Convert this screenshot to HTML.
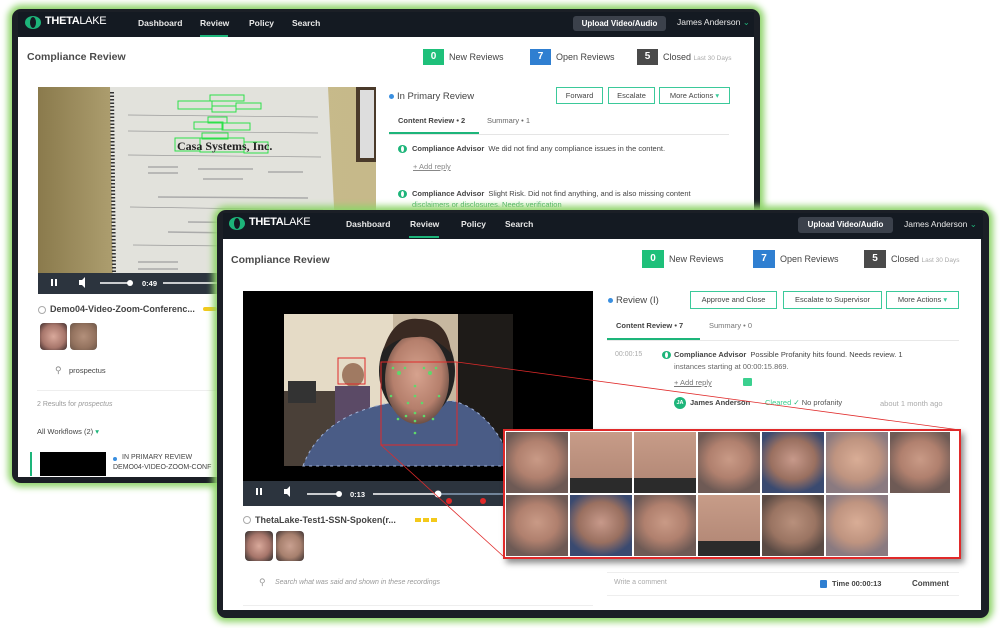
<!DOCTYPE html>
<html><head><meta charset="utf-8"><style>
*{margin:0;padding:0;box-sizing:border-box}
body{width:1000px;height:628px;background:#fff;position:relative;overflow:hidden;font-family:"Liberation Sans",sans-serif;color:#444}
.a{position:absolute;white-space:nowrap}
.win{position:absolute;background:#1b1f26;border-radius:9px;box-shadow:0 0 7px 4px #8fd46a}
.nav{position:absolute;background:#141a22}
.navt{position:absolute;color:#e8e8e8;font-size:8.5px;font-weight:bold}
.logo{position:absolute;width:16px;height:13px;border-radius:50%;background:#1db57a}
.logo:after{content:"";position:absolute;left:5px;top:1px;width:6px;height:11px;border-radius:50%;background:#141a22}
.sl{position:absolute;width:9px;height:8px;border-radius:50%;background:#1db57a}
.sl:after{content:"";position:absolute;left:3px;top:1px;width:3px;height:6px;border-radius:50%;background:#fff}
.up{position:absolute;background:#3b414b;color:#fff;font-size:8px;font-weight:bold;border-radius:3px;text-align:center}
.box{position:absolute;color:#fff;font-weight:bold;font-size:10px;text-align:center}
.btn{position:absolute;border:1px solid #3bc99a;color:#444;font-size:7.5px;text-align:center;background:#fff}
.face{position:absolute;border-radius:4px}
.tile{position:absolute;width:62px;height:61px;background:radial-gradient(ellipse 60% 55% at 50% 45%,#c99a86 0%,#b0806e 55%,#6e5a55 100%)}
</style></head><body>

<!-- WINDOW 1 -->
<div class="win" style="left:12px;top:9px;width:748px;height:474px"></div>
<div class="nav" style="left:18px;top:12px;width:736px;height:25px"></div>
<div class="logo" style="left:25px;top:16px"></div>
<div class="a" style="left:45px;top:15px;color:#fff;font-size:11px;font-weight:bold;letter-spacing:-0.3px">THETA<span style="font-weight:normal">LAKE</span></div>
<div class="navt" style="left:138px;top:18px">Dashboard</div>
<div class="navt" style="left:200px;top:18px">Review</div>
<div style="position:absolute;left:200px;top:35px;width:28px;height:2px;background:#1db57a"></div>
<div class="navt" style="left:249px;top:18px">Policy</div>
<div class="navt" style="left:292px;top:18px">Search</div>
<div class="up" style="left:573px;top:16px;width:93px;height:15px;line-height:15px">Upload Video/Audio</div>
<div class="navt" style="left:677px;top:17px;font-weight:normal">James Anderson <span style="color:#1db57a">⌄</span></div>
<div style="position:absolute;left:18px;top:37px;width:736px;height:440px;background:#fff"></div>
<div class="a" style="left:27px;top:51px;font-size:10.5px;font-weight:bold;color:#4a4a4a">Compliance Review</div>
<div class="box" style="left:423px;top:49px;width:21px;height:16px;line-height:16px;background:#1ec07a">0</div>
<div class="a" style="left:449px;top:52px;font-size:9px">New Reviews</div>
<div class="box" style="left:530px;top:49px;width:21px;height:16px;line-height:16px;background:#2f7fd1">7</div>
<div class="a" style="left:556px;top:52px;font-size:9px">Open Reviews</div>
<div class="box" style="left:637px;top:49px;width:21px;height:16px;line-height:16px;background:#4a4a4a">5</div>
<div class="a" style="left:663px;top:52px;font-size:9px">Closed <span style="font-size:6.5px;color:#aaa">Last 30 Days</span></div>

<!-- video 1 -->
<svg class="a" style="left:38px;top:87px" width="338" height="207" viewBox="0 0 338 207">
<defs><linearGradient id="wall" x1="0" x2="1"><stop offset="0" stop-color="#8a7a4c"/><stop offset=".4" stop-color="#c9bb8b"/><stop offset="1" stop-color="#c6b98a"/></linearGradient></defs>
<rect width="338" height="207" fill="url(#wall)"/>
<polygon points="72,0 290,0 300,200 75,207" fill="#e2e2dc"/>
<line x1="74" y1="5" x2="76" y2="185" stroke="#333" stroke-width="4" stroke-dasharray="1.5 2"/>
<rect x="318" y="0" width="20" height="75" fill="#4a3a2a"/><rect x="322" y="3" width="14" height="68" fill="#ddd"/>
<g fill="none" stroke="#2de04a" stroke-width="1"><rect x="140" y="14" width="34" height="8"/><rect x="172" y="8" width="34" height="6"/><rect x="174" y="19" width="24" height="6"/><rect x="198" y="16" width="25" height="6"/><rect x="170" y="30" width="19" height="6"/><rect x="156" y="35" width="29" height="7"/><rect x="184" y="36" width="28" height="7"/><rect x="164" y="46" width="26" height="6"/><rect x="137" y="51" width="25" height="13"/><rect x="162" y="51" width="44" height="14"/><rect x="206" y="55" width="24" height="11"/></g>
<text x="139" y="63" font-family="Liberation Serif" font-size="12" font-weight="bold" fill="#222">Casa Systems, Inc.</text>
<g stroke="#999" stroke-width=".7"><line x1="90" y1="28" x2="280" y2="30"/><line x1="90" y1="44" x2="280" y2="46"/><line x1="90" y1="68" x2="283" y2="70"/><line x1="92" y1="120" x2="285" y2="123"/><line x1="95" y1="158" x2="290" y2="160"/></g>
<g stroke="#aaa" stroke-width="1.5"><line x1="110" y1="80" x2="140" y2="80"/><line x1="160" y1="82" x2="215" y2="82"/><line x1="230" y1="85" x2="265" y2="85"/><line x1="110" y1="86" x2="140" y2="86"/><line x1="165" y1="92" x2="205" y2="92"/><line x1="120" y1="110" x2="270" y2="111"/><line x1="150" y1="135" x2="260" y2="136"/><line x1="130" y1="145" x2="270" y2="147"/><line x1="100" y1="175" x2="140" y2="175"/><line x1="100" y1="182" x2="140" y2="182"/></g>
<rect x="0" y="186" width="338" height="21" fill="#2c343e"/>
<rect x="13" y="192" width="2" height="7" fill="#fff"/><rect x="17" y="192" width="2" height="7" fill="#fff"/>
<polygon points="41,193 44,193 47,190 47,201 44,198 41,198" fill="#fff"/>
<line x1="62" y1="196" x2="92" y2="196" stroke="#fff" stroke-width="1.5"/><circle cx="92" cy="196" r="3" fill="#fff"/>
<text x="104" y="199" font-size="7.5" fill="#fff" font-weight="bold" font-family="Liberation Sans">0:49</text>
<line x1="125" y1="196" x2="338" y2="196" stroke="#fff" stroke-width="1.5"/>
</svg>

<div class="btn" style="left:556px;top:87px;width:47px;height:17px;line-height:15px">Forward</div>
<div class="btn" style="left:608px;top:87px;width:47px;height:17px;line-height:15px">Escalate</div>
<div class="btn" style="left:659px;top:87px;width:71px;height:17px;line-height:15px">More Actions <span style="color:#3bc99a">▾</span></div>
<div style="position:absolute;left:389px;top:94px;width:5px;height:5px;border-radius:50%;background:#3a8fe0"></div>
<div class="a" style="left:397px;top:91px;font-size:9.5px">In Primary Review</div>
<div class="a" style="left:398px;top:116px;font-size:7.5px;font-weight:bold">Content Review • 2</div>
<div class="a" style="left:487px;top:116px;font-size:7.5px;color:#666">Summary • 1</div>
<div style="position:absolute;left:389px;top:134px;width:340px;height:1px;background:#e5e5e5"></div>
<div style="position:absolute;left:389px;top:132px;width:90px;height:2px;background:#1db57a"></div>
<div class="sl" style="left:398px;top:145px"></div>
<div class="a" style="left:412px;top:144px;font-size:7.5px"><b>Compliance Advisor</b> &nbsp;We did not find any compliance issues in the content.</div>
<div class="a" style="left:413px;top:162px;font-size:7.5px;color:#888;text-decoration:underline">+ Add reply</div>
<div class="sl" style="left:398px;top:190px"></div>
<div class="a" style="left:412px;top:189px;font-size:7.5px"><b>Compliance Advisor</b> &nbsp;Slight Risk. Did not find anything, and is also missing content</div>
<div class="a" style="left:412px;top:200px;font-size:7.5px;color:#3aaa60">disclaimers or disclosures. Needs verification</div>

<div style="position:absolute;left:38px;top:306px;width:8px;height:8px;border-radius:50%;border:1.5px solid #aaa"></div>
<div class="a" style="left:50px;top:304px;font-size:9px;font-weight:bold">Demo04-Video-Zoom-Conferenc...</div>
<div style="position:absolute;left:203px;top:307px;width:14px;height:4px;background:#f3c91b;border-radius:2px"></div>
<div class="face" style="left:40px;top:323px;width:27px;height:27px;background:radial-gradient(ellipse at 50% 50%,#d9a99b 0,#a7766b 60%,#3a2a2a 100%)"></div>
<div class="face" style="left:70px;top:323px;width:27px;height:27px;background:radial-gradient(ellipse at 50% 50%,#b3907b 0,#94735f 60%,#6a5548 100%)"></div>
<div class="a" style="left:55px;top:365px;font-size:9px;color:#888">⚲</div>
<div class="a" style="left:69px;top:366px;font-size:7.5px">prospectus</div>
<div style="position:absolute;left:37px;top:390px;width:180px;height:1px;background:#eee"></div>
<div class="a" style="left:37px;top:401px;font-size:7px;color:#999">2 Results for <i>prospectus</i></div>
<div class="a" style="left:37px;top:427px;font-size:7.5px">All Workflows (2) <span style="color:#1db57a">▾</span></div>
<div style="position:absolute;left:30px;top:452px;width:2px;height:24px;background:#1db57a"></div>
<div style="position:absolute;left:40px;top:452px;width:66px;height:24px;background:#000"></div>
<div style="position:absolute;left:113px;top:457px;width:4px;height:4px;border-radius:50%;background:#3a8fe0"></div>
<div class="a" style="left:122px;top:454px;font-size:7px">IN PRIMARY REVIEW</div>
<div class="a" style="left:113px;top:464px;font-size:7px">DEMO04-VIDEO-ZOOM-CONF</div>

<!-- WINDOW 2 -->
<div class="win" style="left:217px;top:210px;width:772px;height:408px"></div>
<div class="nav" style="left:223px;top:213px;width:760px;height:26px"></div>
<div class="logo" style="left:229px;top:217px"></div>
<div class="a" style="left:249px;top:216px;color:#fff;font-size:11px;font-weight:bold;letter-spacing:-0.3px">THETA<span style="font-weight:normal">LAKE</span></div>
<div class="navt" style="left:346px;top:219px">Dashboard</div>
<div class="navt" style="left:410px;top:219px">Review</div>
<div style="position:absolute;left:409px;top:236px;width:30px;height:2px;background:#1db57a"></div>
<div class="navt" style="left:461px;top:219px">Policy</div>
<div class="navt" style="left:505px;top:219px">Search</div>
<div class="up" style="left:798px;top:217px;width:95px;height:16px;line-height:16px">Upload Video/Audio</div>
<div class="navt" style="left:904px;top:219px;font-weight:normal">James Anderson <span style="color:#1db57a">⌄</span></div>
<div style="position:absolute;left:223px;top:239px;width:758px;height:371px;background:#fff"></div>
<div class="a" style="left:231px;top:254px;font-size:10.5px;font-weight:bold;color:#4a4a4a">Compliance Review</div>
<div class="box" style="left:642px;top:250px;width:22px;height:18px;line-height:18px;background:#1ec07a">0</div>
<div class="a" style="left:669px;top:254px;font-size:9px">New Reviews</div>
<div class="box" style="left:753px;top:250px;width:22px;height:18px;line-height:18px;background:#2f7fd1">7</div>
<div class="a" style="left:780px;top:254px;font-size:9px">Open Reviews</div>
<div class="box" style="left:864px;top:250px;width:22px;height:18px;line-height:18px;background:#4a4a4a">5</div>
<div class="a" style="left:891px;top:254px;font-size:9px">Closed <span style="font-size:6.5px;color:#aaa">Last 30 Days</span></div>

<!-- video 2 -->
<svg class="a" style="left:243px;top:291px" width="350" height="215" viewBox="0 0 350 215">
<defs><radialGradient id="fc" cx=".5" cy=".45" r=".55"><stop offset="0" stop-color="#d6a28e"/><stop offset=".7" stop-color="#b57f6c"/><stop offset="1" stop-color="#6d5046"/></radialGradient></defs>
<rect width="350" height="215" fill="#000"/>
<rect x="41" y="23" width="210" height="152" fill="#e5dbc6"/>
<rect x="150" y="23" width="80" height="152" fill="#c7b8a0"/>
<rect x="215" y="23" width="55" height="152" fill="#1e1b18"/>
<rect x="41" y="100" width="60" height="75" fill="#4a4038"/>
<rect x="45" y="90" width="28" height="22" fill="#333"/>
<ellipse cx="110" cy="84" rx="11" ry="12" fill="#a07a62"/><rect x="92" y="95" width="35" height="45" fill="#5b4a66"/>
<path d="M60 175 Q80 120 160 110 L210 110 Q250 120 270 175 Z" fill="#4a5c86"/>
<path d="M60 175 Q80 120 160 110 L210 110 Q250 120 270 175 Z" fill="none" stroke="#9fb1d6" stroke-width="1" stroke-dasharray="3 4"/>
<ellipse cx="174" cy="80" rx="38" ry="48" fill="#222"/>
<ellipse cx="174" cy="88" rx="32" ry="45" fill="url(#fc)"/>
<path d="M140 60 Q150 25 176 28 Q205 28 208 62 Q190 44 174 46 Q152 46 140 60Z" fill="#3a2a22"/>
<g fill="#5fd86a"><circle cx="156" cy="82" r="2"/><circle cx="187" cy="82" r="2"/><circle cx="150" cy="77" r="1.3"/><circle cx="162" cy="77" r="1.3"/><circle cx="181" cy="77" r="1.3"/><circle cx="193" cy="77" r="1.3"/><circle cx="172" cy="95" r="1.3"/><circle cx="172" cy="105" r="1.3"/><circle cx="165" cy="112" r="1.3"/><circle cx="179" cy="112" r="1.3"/><circle cx="163" cy="125" r="1.3"/><circle cx="172" cy="122" r="1.3"/><circle cx="181" cy="125" r="1.3"/><circle cx="172" cy="130" r="1.3"/><circle cx="148" cy="105" r="1.3"/><circle cx="196" cy="105" r="1.3"/><circle cx="155" cy="128" r="1.3"/><circle cx="190" cy="128" r="1.3"/><circle cx="172" cy="142" r="1.3"/></g>
<rect x="138" y="71" width="76" height="83" fill="none" stroke="#e02a2a" stroke-width="1"/>
<rect x="95" y="67" width="27" height="26" fill="none" stroke="#e02a2a" stroke-width="1"/>
<rect x="0" y="190" width="350" height="25" fill="#2c343e"/>
<rect x="13" y="197" width="2" height="7" fill="#fff"/><rect x="17" y="197" width="2" height="7" fill="#fff"/>
<polygon points="41,198 44,198 47,195 47,206 44,203 41,203" fill="#fff"/>
<line x1="64" y1="203" x2="96" y2="203" stroke="#fff" stroke-width="1.5"/><circle cx="96" cy="203" r="3" fill="#fff"/>
<text x="107" y="206" font-size="7.5" fill="#fff" font-weight="bold" font-family="Liberation Sans">0:13</text>
<line x1="130" y1="203" x2="195" y2="203" stroke="#fff" stroke-width="1.5"/><line x1="195" y1="203" x2="350" y2="203" stroke="#8aa0b8" stroke-width="1.5"/><circle cx="195" cy="203" r="3.5" fill="#fff"/>
<circle cx="206" cy="210" r="3" fill="#e02a2a"/><circle cx="240" cy="210" r="3" fill="#e02a2a"/>
</svg>

<div style="position:absolute;left:608px;top:298px;width:5px;height:5px;border-radius:50%;background:#3a8fe0"></div>
<div class="a" style="left:616px;top:295px;font-size:9.5px">Review (I)</div>
<div class="btn" style="left:690px;top:291px;width:87px;height:18px;line-height:16px">Approve and Close</div>
<div class="btn" style="left:783px;top:291px;width:99px;height:18px;line-height:16px">Escalate to Supervisor</div>
<div class="btn" style="left:886px;top:291px;width:73px;height:18px;line-height:16px">More Actions <span style="color:#3bc99a">▾</span></div>
<div class="a" style="left:616px;top:321px;font-size:7.5px;font-weight:bold">Content Review • 7</div>
<div class="a" style="left:709px;top:321px;font-size:7.5px;color:#777">Summary • 0</div>
<div style="position:absolute;left:607px;top:340px;width:352px;height:1px;background:#e8e8e8"></div>
<div style="position:absolute;left:607px;top:338px;width:93px;height:2px;background:#1db57a"></div>
<div class="a" style="left:615px;top:351px;font-size:7px;color:#aaa">00:00:15</div>
<div class="sl" style="left:662px;top:351px"></div>
<div class="a" style="left:674px;top:350px;font-size:7.5px"><b>Compliance Advisor</b> &nbsp;Possible Profanity hits found. Needs review. 1</div>
<div class="a" style="left:674px;top:362px;font-size:7.5px;color:#666">instances starting at 00:00:15.869.</div>
<div class="a" style="left:674px;top:378px;font-size:7.5px;color:#777;text-decoration:underline">+ Add reply</div>
<div style="position:absolute;left:743px;top:378px;width:9px;height:8px;background:#3bd08f;border-radius:1px"></div>
<div style="position:absolute;left:674px;top:397px;width:12px;height:12px;border-radius:50%;background:#1db57a;color:#fff;font-size:5.5px;text-align:center;line-height:12px;font-weight:bold">JA</div>
<div class="a" style="left:690px;top:398px;font-size:7.5px;font-weight:bold">James Anderson</div>
<div class="a" style="left:765px;top:398px;font-size:7.5px;color:#3bd08f">Cleared <span style="color:#1db57a">✓</span> <span style="color:#555">No profanity</span></div>
<div class="a" style="left:880px;top:399px;font-size:7.5px;color:#aaa">about 1 month ago</div>

<div style="position:absolute;left:243px;top:516px;width:8px;height:8px;border-radius:50%;border:1.5px solid #aaa"></div>
<div class="a" style="left:255px;top:515px;font-size:9px;font-weight:bold">ThetaLake-Test1-SSN-Spoken(r...</div>
<div style="position:absolute;left:415px;top:518px;width:22px;height:4px;background:repeating-linear-gradient(90deg,#f3c91b 0 6px,transparent 6px 8px)"></div>
<div class="face" style="left:245px;top:531px;width:28px;height:30px;background:radial-gradient(ellipse at 50% 50%,#d9a99b 0,#a7766b 55%,#2a2a2a 100%)"></div>
<div class="face" style="left:276px;top:531px;width:28px;height:30px;background:radial-gradient(ellipse at 50% 50%,#c9a090 0,#a7806e 55%,#3a3030 100%)"></div>
<div class="a" style="left:259px;top:577px;font-size:9px;color:#999">⚲</div>
<div class="a" style="left:275px;top:579px;font-size:7px;color:#999;font-style:italic">Search what was said and shown in these recordings</div>
<div style="position:absolute;left:243px;top:605px;width:350px;height:1px;background:#eee"></div>
<div style="position:absolute;left:607px;top:572px;width:352px;height:24px;border-top:1px solid #eee;border-bottom:1px solid #eee"></div>
<div class="a" style="left:614px;top:579px;font-size:7px;color:#aaa">Write a comment</div>
<div style="position:absolute;left:820px;top:580px;width:7px;height:8px;background:#2f7fd1;border-radius:1px"></div>
<div class="a" style="left:832px;top:579px;font-size:7.5px;font-weight:bold">Time 00:00:13</div>
<div class="a" style="left:912px;top:579px;font-size:8px;font-weight:bold">Comment</div>

<!-- red connector lines -->
<svg class="a" style="left:0;top:0" width="1000" height="628"><line x1="457" y1="362" x2="960" y2="430" stroke="#e02a2a" stroke-width="0.8"/><line x1="381" y1="445" x2="503" y2="556" stroke="#e02a2a" stroke-width="0.8"/></svg>

<!-- zoom panel -->
<div style="position:absolute;left:503px;top:429px;width:458px;height:130px;background:#fff;border:2px solid #e02a2a;box-shadow:3px 4px 6px rgba(0,0,0,.45)"></div>
<div class="tile" style="left:506px;top:432px"></div>
<div class="tile" style="left:570px;top:432px;background:linear-gradient(#c79c88 0,#b58a78 75%,#2b2b2b 75%)"></div>
<div class="tile" style="left:634px;top:432px;background:linear-gradient(#c79c88 0,#b58a78 75%,#2b2b2b 75%)"></div>
<div class="tile" style="left:698px;top:432px"></div>
<div class="tile" style="left:762px;top:432px;background:radial-gradient(ellipse 60% 55% at 50% 45%,#c7998a,#9a7060 60%,#3a4a70)"></div>
<div class="tile" style="left:826px;top:432px;background:radial-gradient(ellipse 60% 55% at 50% 45%,#d9ad96,#bf9480 60%,#8a7a80)"></div>
<div class="tile" style="left:890px;top:432px;width:60px"></div>
<div class="tile" style="left:506px;top:495px"></div>
<div class="tile" style="left:570px;top:495px;background:radial-gradient(ellipse 60% 55% at 50% 45%,#c7998a,#9a7060 60%,#3a4a70)"></div>
<div class="tile" style="left:634px;top:495px"></div>
<div class="tile" style="left:698px;top:495px;background:linear-gradient(#c79c88 0,#b58a78 75%,#2b2b2b 75%)"></div>
<div class="tile" style="left:762px;top:495px;background:radial-gradient(ellipse 60% 55% at 50% 45%,#b8907c,#9a7462 60%,#5a4a44)"></div>
<div class="tile" style="left:826px;top:495px;background:radial-gradient(ellipse 60% 55% at 50% 45%,#d9ad96,#bf9480 60%,#8a7a80)"></div>
</body></html>
